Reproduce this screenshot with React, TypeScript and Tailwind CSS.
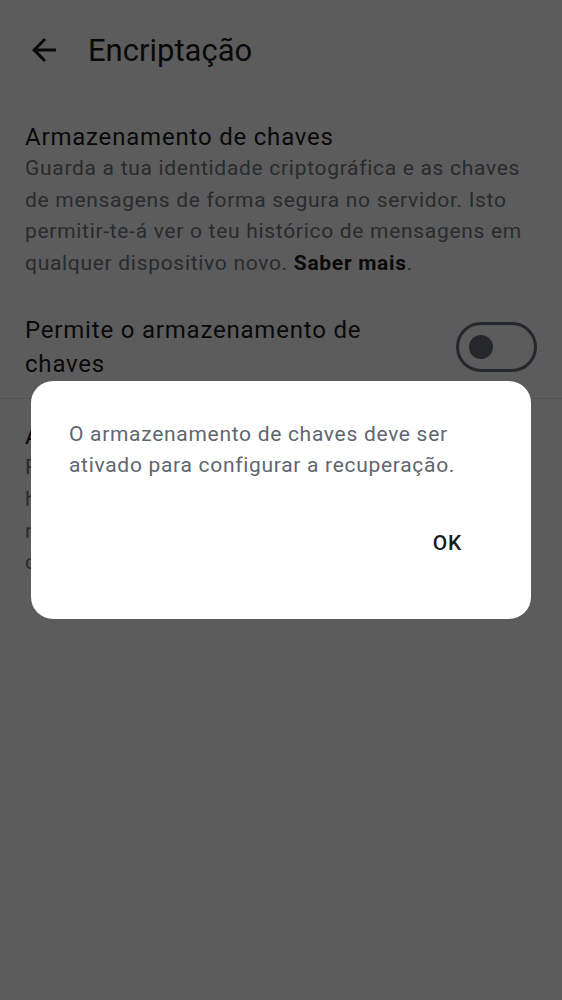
import { MdArrowBack } from "react-icons/md";

const font = { fontFamily: "Roboto, 'Noto Sans', sans-serif" };

export default function App() {
  return (
    <div className="relative h-[1000px] w-full overflow-hidden bg-white" style={font}>
      {/* Top bar */}
      <div className="flex h-[100px] items-center pl-[26px]">
        <MdArrowBack className="h-[36px] w-[36px] text-[#1b1b1d]" />
        <h1 className="ml-[26px] text-[31px] leading-none text-[#1b1b1d]">Encriptação</h1>
      </div>

      {/* Key storage */}
      <div className="px-[25px] pt-[21px]">
        <h2 className="text-[24px] leading-[32px] tracking-[0.8px] text-[#1b1b1d]">
          Armazenamento de chaves
        </h2>
        <p className="text-[21px] leading-[31.6px] tracking-[0.7px] text-[#717880]">
          Guarda a tua identidade criptográfica e as chaves de mensagens de forma segura no
          servidor. Isto permitir-te-á ver o teu histórico de mensagens em qualquer dispositivo
          novo. <span className="font-bold text-[#1b1b1d]">Saber mais</span>.
        </p>
      </div>

      <div className="mt-[34px] flex items-center gap-6 px-[25px]">
        <p className="flex-1 text-[24px] leading-[34px] tracking-[0.8px] text-[#1b1b1d]">
          Permite o armazenamento de chaves
        </p>
        <div className="flex h-[50px] w-[81px] shrink-0 items-center rounded-full border-[3px] border-[#656d77] pl-[10px]">
          <div className="h-[24px] w-[24px] rounded-full bg-[#656d77]" />
        </div>
      </div>

      <div className="mt-[17px] h-px bg-[#e1e3e6]" />

      {/* Recovery */}
      <div className="px-[25px] pt-[21px]">
        <h2 className="text-[24px] leading-[32px] tracking-[0.8px] text-[#1b1b1d]">
          Ativar recuperação
        </h2>
        <div className="text-[21px] leading-[31.6px] tracking-[0.7px] text-[#717880]">
          <div>Recupera a tua identidade criptográfica e o</div>
          <div>histórico de mensagens num dispositivo</div>
          <div>novo caso percas todos os teus</div>
          <div>conectados.</div>
        </div>
      </div>

      {/* Scrim + dialog */}
      <div className="absolute inset-0 flex items-center justify-center bg-black/[0.64]">
        <div className="flex h-[238px] w-[500px] flex-col rounded-[22px] bg-white px-[38px] pt-[38px]">
          <p className="text-[21px] leading-[31px] tracking-[0.7px] text-[#5f6670]">
            O armazenamento de chaves deve ser ativado para configurar a recuperação.
          </p>
          <div className="mt-auto mb-[65px] flex justify-end pr-[31px]">
            <button className="text-[21px] font-medium leading-none tracking-[0.7px] text-[#1b1b1d]">
              OK
            </button>
          </div>
        </div>
      </div>
    </div>
  );
}
